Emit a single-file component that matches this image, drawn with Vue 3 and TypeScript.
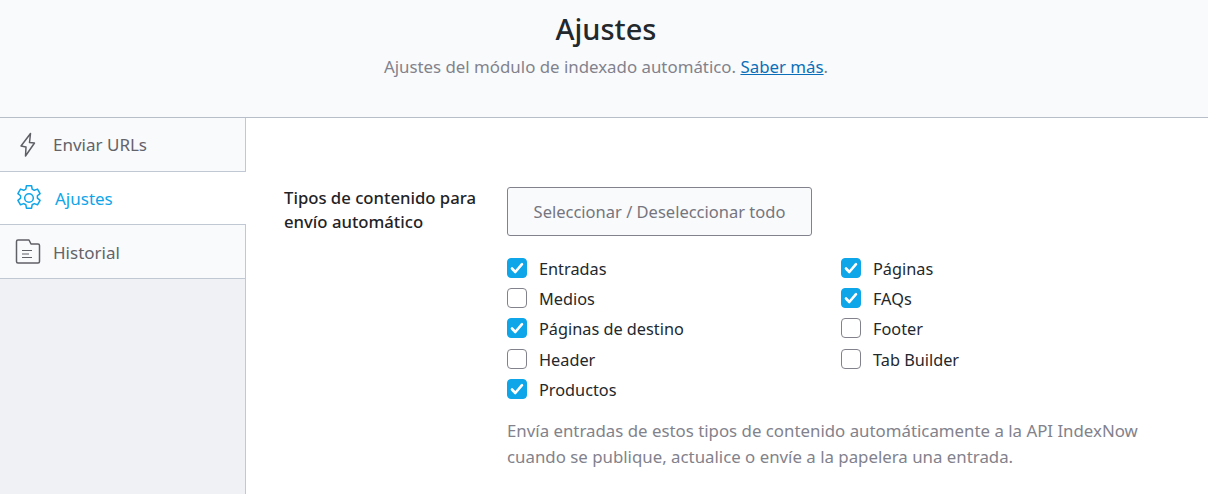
<template>
  <div class="page">
    <header class="head">
      <h1>Ajustes</h1>
      <p>Ajustes del módulo de indexado automático. <a href="#">Saber más</a>.</p>
    </header>
    <div class="body">
      <nav class="side">
        <a class="tab" href="#">
          <svg class="ico" width="26" height="28" viewBox="0 0 26 28" fill="none" stroke="#5f5f66" stroke-width="1.500" stroke-linejoin="round">
            <path d="M15.500 2.500 6 15l5 1-.5 9 9-13-5-.5 1-9Z" />
          </svg>
          <span>Enviar URLs</span>
        </a>
        <a class="tab active" href="#">
          <svg class="ico" width="28" height="28" viewBox="0 0 24 24" fill="none" stroke="#0ea5e9" stroke-width="1.300" stroke-linejoin="round">
            <path d="M9.800 1.500h4.400l.5 2.900 1.800 1 2.800-1 2.200 3.800-2.300 1.900v2l2.300 1.900-2.200 3.800-2.800-1-1.800 1-.5 2.900H9.800l-.5-2.900-1.800-1-2.800 1-2.200-3.800 2.300-1.900v-2L2.500 8.200l2.200-3.800 2.800 1 1.800-1 .5-2.900Z" />
            <circle cx="12" cy="12" r="3.700" />
          </svg>
          <span>Ajustes</span>
        </a>
        <a class="tab" href="#">
          <svg class="ico" width="26" height="26" viewBox="0 0 26 26" fill="none" stroke="#5f5f66" stroke-width="1.500" stroke-linejoin="round">
            <path d="M1.500 2.500a1.500 1.500 0 0 1 1.500-1.500h11l2 4h7a1.500 1.500 0 0 1 1.500 1.500v16a1.500 1.500 0 0 1-1.500 1.500H3a1.500 1.500 0 0 1-1.500-1.500V2.500Z" />
            <path d="M7 11.500h10M7 15h7M7 18.500h10" stroke-width="1.200" />
          </svg>
          <span>Historial</span>
        </a>
      </nav>
      <main class="content">
        <div class="label">Tipos de contenido para envío automático</div>
        <div class="field">
          <button class="toggle" type="button">Seleccionar / Deseleccionar todo</button>
          <div class="checks">
            <label v-for="item in types" :key="item.name" class="check">
              <span class="box" :class="{ on: item.on }">
                <svg v-if="item.on" width="14" height="12" viewBox="0 0 14 12" fill="none" stroke="#fff" stroke-width="2.600" stroke-linecap="round" stroke-linejoin="round">
                  <path d="M2 6.500 5.300 10 12 2.200" />
                </svg>
              </span>
              <span class="name">{{ item.name }}</span>
            </label>
          </div>
          <p class="hint">Envía entradas de estos tipos de contenido automáticamente a la API IndexNow cuando se publique, actualice o envíe a la papelera una entrada.</p>
        </div>
      </main>
    </div>
  </div>
</template>

<script setup lang="ts">
interface ContentType {
  name: string
  on: boolean
}

const types: ContentType[] = [
  { name: 'Entradas', on: true },
  { name: 'Páginas', on: true },
  { name: 'Medios', on: false },
  { name: 'FAQs', on: true },
  { name: 'Páginas de destino', on: true },
  { name: 'Footer', on: false },
  { name: 'Header', on: false },
  { name: 'Tab Builder', on: false },
  { name: 'Productos', on: true },
]
</script>

<style>
html, body {
  margin: 0;
  background: #fff;
}
</style>

<style scoped>
.page {
  height: 494px;
  overflow: hidden;
  font-family: "Noto Sans", "Open Sans", sans-serif;
  color: #23282d;
  display: flex;
  flex-direction: column;
}

.head {
  height: 117px;
  flex: none;
  padding-left: 4px;
  background: #f9fafc;
  border-bottom: 1px solid #b8bec8;
  text-align: center;
}

.head h1 {
  margin: 0;
  padding-top: 9px;
  font-size: 29px;
  line-height: 40px;
  font-weight: 500;
  color: #23282d;
}

.head p {
  margin: 0;
  padding-top: 5px;
  font-size: 16.850px;
  line-height: 26px;
  color: #82828c;
}

.head a {
  color: #0a6fb8;
}

.body {
  flex: 1;
  display: flex;
}

.side {
  width: 245px;
  flex: none;
  background: #f0f1f4;
  border-right: 1px solid #c0c8d4;
}

.tab {
  height: 54px;
  display: flex;
  align-items: center;
  gap: 12px;
  padding-left: 15px;
  box-sizing: border-box;
  background: #f9fafc;
  border-bottom: 1px solid #c0c8d4;
  color: #636369;
  font-size: 17px;
  text-decoration: none;
}

.tab:last-child {
  padding-top: 1px;
}

.tab.active {
  height: 53px;
  background: #fff;
  color: #0ea5e9;
  margin-right: -1px;
}

.ico {
  flex: none;
}

.content {
  flex: 1;
  display: flex;
  padding: 68px 0 0 38px;
}

.label {
  width: 223px;
  flex: none;
  font-size: 16.700px;
  line-height: 24px;
  font-weight: 500;
  color: #1f2327;
}

.field {
  width: 668px;
}

.toggle {
  display: block;
  width: 305px;
  height: 49px;
  margin-top: 1px;
  background: #f9fafc;
  border: 1px solid #82828c;
  border-radius: 3px;
  color: #75757e;
  font: inherit;
  font-size: 16.500px;
}

.checks {
  display: grid;
  grid-template-columns: 334px 1fr;
  grid-auto-rows: 30.200px;
  margin-top: 17px;
}

.check {
  display: flex;
  align-items: center;
  gap: 12px;
  font-size: 16.300px;
  color: #23282d;
}

.name {
  padding-top: 2px;
}

.box {
  width: 20px;
  height: 20px;
  box-sizing: border-box;
  border: 1px solid #82828c;
  border-radius: 4px;
  background: #fff;
  display: flex;
  align-items: center;
  justify-content: center;
}

.box.on {
  background: #0ea5e9;
  border-color: #0ea5e9;
}

.hint {
  margin: 14px 0 0;
  font-size: 16.830px;
  line-height: 26px;
  color: #82828c;
}
</style>
